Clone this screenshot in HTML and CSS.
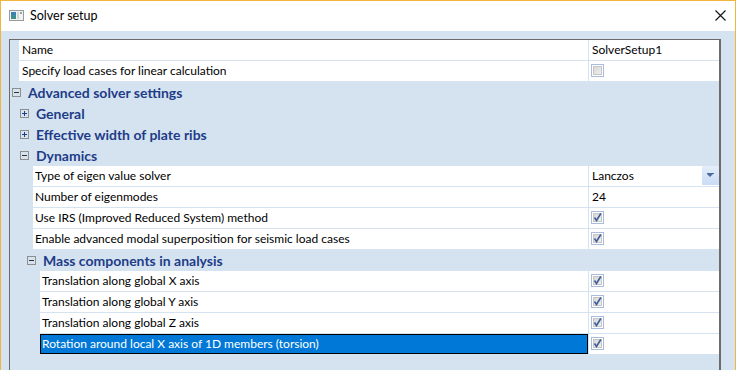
FILE: index.html
```html
<!DOCTYPE html>
<html lang="en">
<head>
  <meta charset="UTF-8" />
  <title>Solver setup</title>
  <link rel="stylesheet" href="styles.css">
</head>
<body>

  <div class="window">
    <!-- title bar -->
    <div class="titlebar">
      <svg class="app-icon" width="15" height="11" viewBox="0 0 15 11">
        <rect x="0.5" y="0.5" width="14" height="10" fill="#f2f2f2" stroke="#9a9a9a"/>
        <rect x="2" y="2" width="5" height="7" fill="#3d8f8a"/>
        <rect x="2" y="2" width="5" height="3" fill="#3f7fb8"/>
        <rect x="8" y="2" width="2" height="7" fill="#cfd8d8"/>
        <rect x="11" y="2" width="2" height="2" fill="#8aa8a0"/>
      </svg>
      <span class="title">Solver setup</span>
      <svg class="close" width="11" height="11" viewBox="0 0 11 11">
        <path d="M0.5 0.5 L10.5 10.5 M10.5 0.5 L0.5 10.5" stroke="#111" stroke-width="1.1"/>
      </svg>
    </div>

    <div class="client">
      <div class="grid">

        <div class="row"><div class="label lvl0">Name</div><div class="value">SolverSetup1</div></div>
        <div class="row"><div class="label lvl0">Specify load cases for linear calculation</div><div class="value"><span class="cb"></span></div></div>

        <div class="group g0"><span class="toggle minus"></span>Advanced solver settings</div>
        <div class="group g1"><span class="toggle plus"></span>General</div>
        <div class="group g1"><span class="toggle plus"></span>Effective width of plate ribs</div>
        <div class="group g1"><span class="toggle minus"></span>Dynamics</div>

        <div class="row"><div class="label lvl2">Type of eigen value solver</div><div class="value combo">Lanczos<span class="drop"></span></div></div>
        <div class="row"><div class="label lvl2">Number of eigenmodes</div><div class="value">24</div></div>
        <div class="row"><div class="label lvl2">Use IRS (Improved Reduced System) method</div><div class="value"><span class="cb"><svg viewBox="0 0 11 11"><path d="M2.5 5.5 L4.5 8.5 L8.8 1.5" /></svg></span></div></div>
        <div class="row"><div class="label lvl2">Enable advanced modal superposition for seismic load cases</div><div class="value"><span class="cb"><svg viewBox="0 0 11 11"><path d="M2.5 5.5 L4.5 8.5 L8.8 1.5" /></svg></span></div></div>

        <div class="group g2"><span class="toggle minus"></span>Mass components in analysis</div>

        <div class="row"><div class="label lvl3">Translation along global X axis</div><div class="value"><span class="cb"><svg viewBox="0 0 11 11"><path d="M2.5 5.5 L4.5 8.5 L8.8 1.5" /></svg></span></div></div>
        <div class="row"><div class="label lvl3">Translation along global Y axis</div><div class="value"><span class="cb"><svg viewBox="0 0 11 11"><path d="M2.5 5.5 L4.5 8.5 L8.8 1.5" /></svg></span></div></div>
        <div class="row"><div class="label lvl3">Translation along global Z axis</div><div class="value"><span class="cb"><svg viewBox="0 0 11 11"><path d="M2.5 5.5 L4.5 8.5 L8.8 1.5" /></svg></span></div></div>
        <div class="row"><div class="label lvl3 selected">Rotation around local X axis of 1D members (torsion)</div><div class="value"><span class="cb"><svg viewBox="0 0 11 11"><path d="M2.5 5.5 L4.5 8.5 L8.8 1.5" /></svg></span></div></div>

      </div>
    </div>
  </div>

</body>
</html>
```

FILE: styles.css
```css
body {
  margin: 0;
  font-family: "Segoe UI", Lato, "Noto Sans", sans-serif;
  font-size: 12px;
  color: #000;
  background: #fff;
  overflow: hidden;
}
.window {
  height: 369px;
  border: 1px solid #f0b53a;
  border-bottom: none;
  display: flex;
  flex-direction: column;
  overflow: hidden;
}
.titlebar {
  flex-shrink: 0;
  height: 30px;
  background: #fff;
  display: flex;
  align-items: center;
}
.app-icon {
  margin-left: 8px;
  margin-top: -2px;
}
.title {
  margin-left: 6px;
  font-size: 12.5px;
  margin-top: -2px;
}
.close {
  margin-left: auto;
  margin-right: 9px;
  margin-top: -2px;
}
.client {
  flex: 1;
  min-height: 0;
  overflow: hidden;
  background: #d5e3f1;
  padding: 8px 14px 0 8px;
}
.grid {
  height: 340px;
  border-top: 1px solid #6b6b6b;
  border-left: 1px solid #6b6b6b;
  border-right: 2px solid #6b6b6b;
}
.row {
  display: flex;
  height: 20px;
  margin-bottom: 1px;
  line-height: 20px;
}
.label {
  flex: 1;
  background: #fff;
  padding-left: 3px;
  white-space: nowrap;
  overflow: hidden;
}
.lvl0 { margin-left: 9px; }
.lvl2 { margin-left: 23px; padding-left: 2px; }
.lvl3 { margin-left: 30px; padding-left: 2px; }
.label.selected {
  background: #0078d7;
  color: #fff;
  border: 1px solid #000;
  line-height: 18px;
  padding-left: 1px;
}
.value {
  width: 130px;
  margin-left: 1px;
  background: #fff;
  padding-left: 3px;
  box-sizing: border-box;
  position: relative;
}
.combo .drop {
  position: absolute;
  right: 0;
  top: 0;
  width: 17px;
  height: 19px;
  background: linear-gradient(#e4eefb, #c9dbf5);
}
.combo .drop::after {
  content: "";
  position: absolute;
  left: 5px;
  top: 8px;
  width: 0;
  height: 0;
  border-left: 3px solid transparent;
  border-right: 3px solid transparent;
  border-top: 3px solid #4b6b9c;
}
.combo .drop::before {
  content: "";
  position: absolute;
  left: 5px;
  top: 7px;
  width: 7px;
  height: 1px;
  background: #4b6b9c;
}
.cb {
  display: inline-block;
  width: 13px;
  height: 13px;
  box-sizing: border-box;
  border: 1px solid #a9bcdb;
  background: linear-gradient(135deg, #d2d2d2, #f5f5f5);
  box-shadow: inset 0 0 0 1px #fff, inset 0 0 0 2px #c6c6c6;
  vertical-align: top;
  margin-top: 3px;
  margin-left: -1px;
}
.cb svg {
  display: block;
  width: 11px;
  height: 11px;
}
.cb path {
  fill: none;
  stroke: #3e5f98;
  stroke-width: 1.6;
}
.group {
  display: flex;
  align-items: center;
  height: 20px;
  margin-bottom: 1px;
  font-weight: bold;
  font-size: 14px;
  color: #1f3c88;
  white-space: nowrap;
}
.toggle {
  width: 9px;
  height: 9px;
  box-sizing: border-box;
  border: 1px solid #8e8e8e;
  margin-right: 7px;
  position: relative;
}
.toggle::before {
  content: "";
  position: absolute;
  left: 1px;
  top: 3px;
  width: 5px;
  height: 1px;
  background: #333;
}
.toggle.plus::after {
  content: "";
  position: absolute;
  left: 3px;
  top: 1px;
  width: 1px;
  height: 5px;
  background: #1f3c88;
}
.toggle.plus::before { background: #1f3c88; }
.g0 .toggle { margin-left: 2px; }
.g1 .toggle { margin-left: 10px; }
.g2 .toggle { margin-left: 17px; }
```
